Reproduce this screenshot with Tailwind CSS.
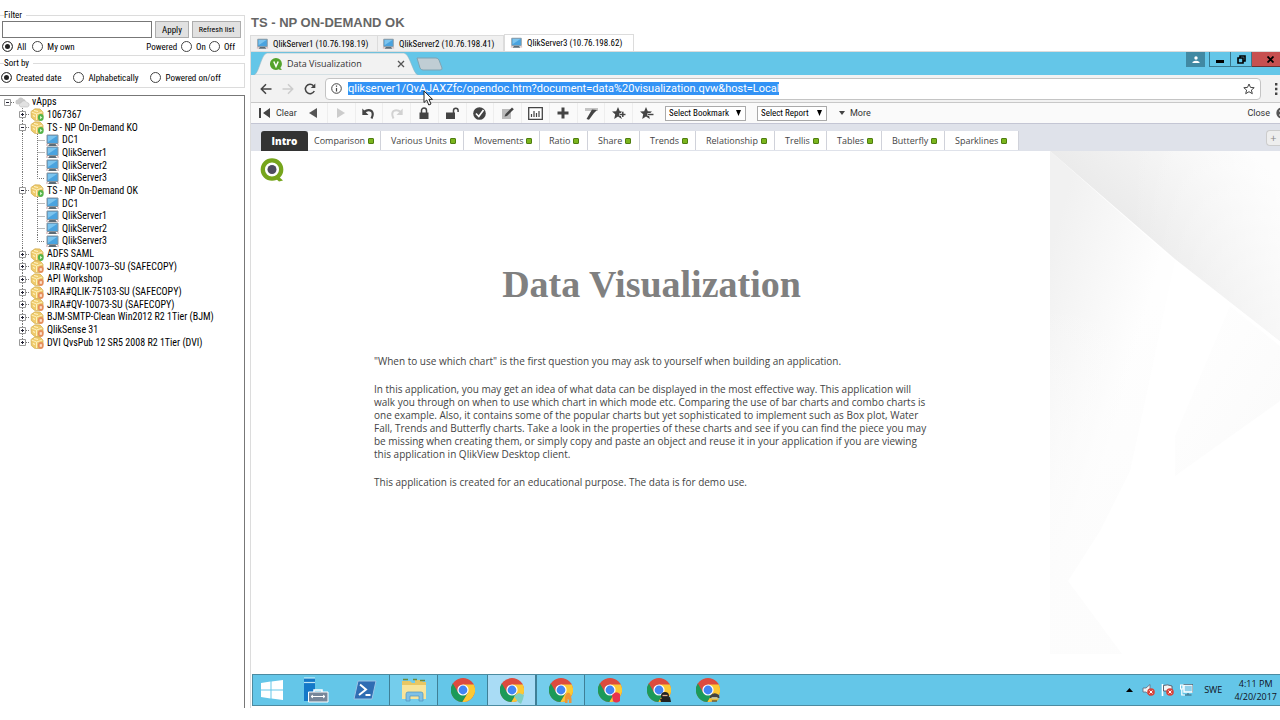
<!DOCTYPE html>
<html lang="en">
<head>
    <meta charset="UTF-8">
    <meta name="viewport" content="width=device-width, initial-scale=1.0">
    <title>TS - NP On-Demand OK</title>
    <script src="https://cdn.jsdelivr.net/npm/@tailwindcss/browser@4"></script>
</head>
<body class="bg-white text-black text-[9px] leading-[12px] font-['Roboto_Condensed','Roboto',sans-serif]">
    <!-- Icon sprite -->
    <svg class="hidden">
        <symbol id="t-line" viewBox="0 0 15 13"><path d="M7.5 0V13" stroke="#777" stroke-dasharray="1 1"/></symbol>
        <symbol id="t-tee" viewBox="0 0 15 13"><path d="M7.5 0V13M7.5 6.5H15" stroke="#777" stroke-dasharray="1 1" fill="none"/></symbol>
        <symbol id="t-end" viewBox="0 0 15 13"><path d="M7.5 0V6.5H15" stroke="#777" stroke-dasharray="1 1" fill="none"/></symbol>
        <symbol id="t-root" viewBox="0 0 15 13"><path d="M11 6.5H15" stroke="#777" stroke-dasharray="1 1"/><path d="M4.500 3.500h6v6h-6z" fill="#fff" stroke="#999"/><path d="M6 6.500h3" stroke="#223"/></symbol>
        <symbol id="t-minus" viewBox="0 0 15 13"><path d="M7.500 0V3M7.500 10V13M11 6.500H15" stroke="#777" stroke-dasharray="1 1"/><path d="M4.500 3.500h6v6h-6z" fill="#fff" stroke="#999"/><path d="M6 6.500h3" stroke="#223"/></symbol>
        <symbol id="t-plus" viewBox="0 0 15 13"><path d="M7.500 0V3M7.500 10V13M11 6.500H15" stroke="#777" stroke-dasharray="1 1"/><path d="M4.500 3.500h6v6h-6z" fill="#fff" stroke="#999"/><path d="M6 6.500h3M7.500 5v3" stroke="#223"/></symbol>
        <symbol id="t-plusend" viewBox="0 0 15 13"><path d="M7.500 0V3M11 6.500H15" stroke="#777" stroke-dasharray="1 1"/><path d="M4.500 3.500h6v6h-6z" fill="#fff" stroke="#999"/><path d="M6 6.500h3M7.500 5v3" stroke="#223"/></symbol>
        <symbol id="cloud" viewBox="0 0 15 13"><path d="M3 8.500a2.500 2.500 0 0 1 0-5 3 3 0 0 1 5.500-.5 2.500 2.500 0 0 1 2 2.500z" fill="#c9c9c9"/><path d="M6 11a2.300 2.300 0 0 1 .3-4.500 3 3 0 0 1 5.500 0A2.300 2.300 0 0 1 12.500 11z" fill="#e2e2e2" stroke="#bbb" stroke-width=".6"/></symbol>
        <symbol id="vapp-on" viewBox="0 0 15 13"><path d="M1 3.500 5 .8 10 1l3 3v5l-3.500 3.500-5-.2L1.300 9.500z" fill="#efcb6c" stroke="#cfa749" stroke-width=".7"/><path d="M1.500 4 6.500 6v6M6.500 6 12.500 4" fill="none" stroke="#fdf0bd"/><path d="M4 2.500 8 3.500M3 7.500l2 1" stroke="#fff3c4" stroke-width="1.200"/><ellipse cx="10.800" cy="9.500" rx="2.900" ry="3.400" fill="#55b34a"/><path d="M10 7.800v3.400l2.400-1.700z" fill="#d8f5cf"/></symbol>
        <symbol id="vapp-off" viewBox="0 0 15 13"><path d="M1 3.500 5 .8 10 1l3 3v5l-3.500 3.500-5-.2L1.300 9.500z" fill="#efcb6c" stroke="#cfa749" stroke-width=".7"/><path d="M1.500 4 6.500 6v6M6.500 6 12.500 4" fill="none" stroke="#fdf0bd"/><path d="M4 2.500 8 3.500M3 7.500l2 1" stroke="#fff3c4" stroke-width="1.200"/><ellipse cx="10.800" cy="9.500" rx="2.900" ry="3.400" fill="#e58f5c"/><path d="M9.700 8.200h2.200v2.600H9.700z" fill="#fbe3cf"/></symbol>
        <symbol id="pc" viewBox="0 0 15 13"><path d="M2 1h11v8.500H2z" fill="#4aa3df" stroke="#8a949c"/><path d="M3 2h9L3 8z" fill="#7cc4ee"/><path d="M4.500 10h6l1.500 2H3z" fill="#5d6b75"/><path d="M1 11h2M12 11h2" stroke="#c99"/></symbol>
        <symbol id="chrome" viewBox="0 0 24 24"><circle cx="12" cy="12" r="12" fill="#dd4b3e"/><path d="M12 6.500H22.700A12 12 0 0 1 11.200 24L16.760 14.750Z" fill="#fcc934"/><path d="M1.900 5.400 7.240 14.750 16.760 14.750 11.200 24A12 12 0 0 1 1.900 5.400Z" fill="#1b9a59"/><circle cx="12" cy="12" r="5.600" fill="#fff"/><circle cx="12" cy="12" r="4.400" fill="#4285f4"/></symbol>
    </svg>

    <div class="flex min-h-screen pb-3">
        <!-- Sidebar -->
        <aside class="flex flex-col w-[245px] shrink-0 pt-[9px]">
            <fieldset class="border border-[#dcdcdc] border-l-0">
                <legend class="ml-1 pr-1">Filter</legend>
                <div class="flex h-[17px] gap-[3px] pl-[2px] pr-[3px] items-stretch">
                    <input type="text" aria-label="Filter" class="w-[150px] border border-[#777] bg-white px-1">
                    <button class="w-[34px] border border-[#adadad] bg-[#e1e1e1]">Apply</button>
                    <button class="flex-1 border border-[#adadad] bg-[#e1e1e1] text-[8px]">Refresh list</button>
                </div>
                <div class="flex h-[17px] items-center pl-[2px] pr-[9px]">
                    <label class="flex items-center gap-1"><input type="radio" name="owner" checked class="appearance-none size-[11px] rounded-full border border-[#444] checked:bg-[#222] checked:shadow-[inset_0_0_0_2px_#fff]">All</label>
                    <label class="flex items-center gap-1 ml-[6px]"><input type="radio" name="owner" class="appearance-none size-[11px] rounded-full border border-[#444] checked:bg-[#222] checked:shadow-[inset_0_0_0_2px_#fff]">My own</label>
                    <span class="ml-auto">Powered</span>
                    <label class="flex items-center gap-1 ml-1"><input type="radio" name="power" class="appearance-none size-[11px] rounded-full border border-[#444] checked:bg-[#222] checked:shadow-[inset_0_0_0_2px_#fff]">On</label>
                    <label class="flex items-center gap-1 ml-[3px]"><input type="radio" name="power" class="appearance-none size-[11px] rounded-full border border-[#444] checked:bg-[#222] checked:shadow-[inset_0_0_0_2px_#fff]">Off</label>
                </div>
            </fieldset>
            <fieldset class="mt-px border border-[#dcdcdc] border-l-0 pb-px">
                <legend class="ml-1 pr-1">Sort by</legend>
                <div class="flex h-[17px] items-center pl-px gap-3 whitespace-nowrap">
                    <label class="flex items-center gap-1"><input type="radio" name="sort" checked class="appearance-none size-[11px] rounded-full border border-[#444] checked:bg-[#222] checked:shadow-[inset_0_0_0_2px_#fff]">Created date</label>
                    <label class="flex items-center gap-1"><input type="radio" name="sort" class="appearance-none size-[11px] rounded-full border border-[#444] checked:bg-[#222] checked:shadow-[inset_0_0_0_2px_#fff]">Alphabetically</label>
                    <label class="flex items-center gap-1"><input type="radio" name="sort" class="appearance-none size-[11px] rounded-full border border-[#444] checked:bg-[#222] checked:shadow-[inset_0_0_0_2px_#fff]">Powered on/off</label>
                </div>
            </fieldset>
            <div class="mt-[7px] flex-1 border-t border-r border-[#777]">
                <ul id="tree" class="grid auto-rows-fr h-[253px] text-[10px]"></ul>
            </div>
        </aside>

        <!-- Console -->
        <main class="flex flex-col flex-1 min-w-0 ml-[5px] overflow-hidden">
            <h1 class="pt-3 pl-px h-[34px] text-[13px] leading-[22px] font-bold text-[#666] font-['Liberation_Sans',sans-serif]">TS - NP ON-DEMAND OK</h1>
            <div class="flex h-[17px] items-end whitespace-nowrap" role="tablist">
                <button role="tab" class="flex items-center gap-1 h-4 w-[128px] pl-[5px] bg-[#f0f0f0] border border-b-0 border-[#dcdcdc]"><svg class="w-[13px] h-3"><use href="#pc"/></svg>QlikServer1 (10.76.198.19)</button>
                <button role="tab" class="flex items-center gap-1 h-4 w-[126px] pl-[4px] bg-[#f0f0f0] border border-b-0 border-l-0 border-[#dcdcdc]"><svg class="w-[13px] h-3"><use href="#pc"/></svg>QlikServer2 (10.76.198.41)</button>
                <button role="tab" class="flex items-center gap-1 h-[17px] w-[130px] pl-[5px] bg-white border border-b-0 border-[#dcdcdc]"><svg class="w-[13px] h-3"><use href="#pc"/></svg>QlikServer3 (10.76.198.62)</button>
            </div>

            <div class="flex flex-col flex-1 border-t border-l border-[#dcdcdc] font-['Open_Sans',sans-serif]">
                <!-- Browser title bar -->
                <div class="flex h-[23px] bg-[#64c6e8] pl-[3px]">
                    <div class="relative w-[164px] h-[23px] flex items-center pl-[16px] text-[#333]">
                        <svg class="absolute inset-0" width="164" height="23" viewBox="0 0 164 23"><path d="M0 23C5 22 7 2 13 1H150C156 2 159 22 164 23Z" fill="#f2f2f2" stroke="#8fb5c4" stroke-width=".6"/></svg>
                        <svg class="relative size-3" viewBox="0 0 12 12"><path d="M6 0a6 6 0 1 1-.1 12A6 6 0 0 1 6 0Zm3 9 3 2.500-2 .5-3-2z" fill="#54a32c"/><path d="M3.800 3.500 6 8.500 8.200 3.500" fill="none" stroke="#fff" stroke-width="1.500"/></svg>
                        <span class="relative ml-[5px]">Data Visualization</span>
                        <button aria-label="Close tab" class="relative ml-auto mr-[13px]"><svg class="size-[8px]" viewBox="0 0 8 8"><path d="M1 1 7 7M7 1 1 7" stroke="#555" stroke-width="1.300"/></svg></button>
                    </div>
                    <button aria-label="New tab" class="self-center ml-[-2px]"><svg class="w-[27px] h-[14px]" viewBox="0 0 27 14"><path d="M1 1H20Q22 1 23 3L26 11Q26.500 13 24 13H7Q5 13 4 11Z" fill="#c0cdd4" stroke="#7fa3b3"/></svg></button>
                    <div class="ml-auto flex h-[15px]">
                        <button aria-label="Profile" class="flex justify-center items-center w-[19px] mr-1 bg-[#4189a3]"><svg class="size-[8px]" viewBox="0 0 8 8"><circle cx="4" cy="2" r="1.700" fill="#fff"/><path d="M.5 7V6Q4 3.500 7.500 6V7Z" fill="#fff"/></svg></button>
                        <button aria-label="Minimize" class="flex justify-center items-center w-[22px] border border-t-0 border-[#3a788e]"><svg class="w-2 h-[10px]" viewBox="0 0 8 10"><path d="M0 6H8V9H0Z"/></svg></button>
                        <button aria-label="Restore" class="flex justify-center items-center w-[21px] border border-t-0 border-l-0 border-[#3a788e]"><svg class="size-[9px]" viewBox="0 0 9 9"><path d="M3 2.500V1H8V6H6.500M1 3H6V8H1Z" fill="none" stroke="#000" stroke-width="1.600"/></svg></button>
                        <button aria-label="Close" class="flex justify-center items-center w-7 pl-[8px] bg-[#c75050] border-b border-[#6b3030]"><svg class="size-[7px]" viewBox="0 0 7 7"><path d="M.5.5 6.500 6.500M6.500.5.5 6.500" stroke="#000" stroke-width="1.800"/></svg></button>
                    </div>
                </div>

                <!-- Address bar -->
                <div class="flex items-center h-[28px] bg-[#f2f2f2] border-b border-[#c8c8c8]">
                    <button aria-label="Back" class="flex justify-center w-[22px] ml-1"><svg class="size-3" viewBox="0 0 12 12"><path d="M11.500 6H1.500M6 1.300 1.300 6 6 10.700" fill="none" stroke="#444" stroke-width="1.500"/></svg></button>
                    <button aria-label="Forward" class="flex justify-center w-[22px]"><svg class="size-3" viewBox="0 0 12 12"><path d="M.5 6H10.500M6 1.300 10.700 6 6 10.700" fill="none" stroke="#ccc" stroke-width="1.500"/></svg></button>
                    <button aria-label="Reload" class="flex justify-center w-[22px]"><svg class="size-3" viewBox="0 0 12 12"><path d="M10.300 8A4.700 4.700 0 1 1 9.500 2.700" fill="none" stroke="#444" stroke-width="1.500"/><path d="M11.300.5V5H6.800Z" fill="#444"/></svg></button>
                    <div class="flex flex-1 items-center h-[22px] ml-1 pl-[5px] pr-[5px] bg-white border border-[#c4c4c4] rounded-sm">
                        <svg class="size-[11px] mr-[6px]" viewBox="0 0 11 11"><circle cx="5.500" cy="5.500" r="4.800" fill="none" stroke="#444"/><path d="M5.500 5V8.500M5.500 2.500V3.800" stroke="#444" stroke-width="1.200"/></svg>
                        <input type="text" aria-label="Address" value="qlikserver1/QvAJAXZfc/opendoc.htm?document=data%20visualization.qvw&amp;host=Local" class="field-sizing-content h-[13px] leading-[13px] text-[11px] bg-[#3393f5] text-white font-['Roboto',sans-serif]">
                        <button aria-label="Bookmark this page" class="ml-auto"><svg class="size-3" viewBox="0 0 12 12"><path d="M6 1 7.500 4.400 11.200 4.700 8.400 7.100 9.300 10.700 6 8.700 2.700 10.700 3.600 7.100.8 4.700 4.500 4.400Z" fill="none" stroke="#444"/></svg></button>
                    </div>
                    <button aria-label="Menu" class="w-[19px] pl-[13px]"><svg class="w-1 h-3" viewBox="0 0 4 12"><path d="M1 0h2.400v2.400H1zM1 4.800h2.400v2.400H1zM1 9.600h2.400V12H1z" fill="#444"/></svg></button>
                </div>

                <!-- QlikView toolbar -->
                <div class="flex items-center h-[21px] bg-[#fafafa] border-b border-[#c4c6d4] text-[#333] font-['Roboto',sans-serif]">
                    <button class="flex items-center gap-[5px] w-[49px] pl-2"><svg class="w-3 h-[10px]" viewBox="0 0 12 10"><path d="M0 0H2V10H0ZM11 0V10L4 5Z" fill="#444"/></svg>Clear</button>
                    <div class="flex w-[360px] h-full divide-x divide-[#eee]">
                        <button aria-label="Back" class="flex flex-1 justify-center items-center"><svg class="size-3" viewBox="0 0 12 12"><path d="M10 1V11L2 6Z" fill="#555"/></svg></button>
                        <button aria-label="Forward" class="flex flex-1 justify-center items-center"><svg class="size-3" viewBox="0 0 12 12"><path d="M2 1V11L10 6Z" fill="#ccc"/></svg></button>
                        <button aria-label="Undo" class="flex flex-1 justify-center items-center"><svg class="size-[13px]" viewBox="0 0 13 13"><path d="M2 5Q6 2 9.500 4 12 6.500 9.500 11.500" fill="none" stroke="#444" stroke-width="2.200"/><path d="M.3 1.500V8H6.500Z" fill="#444"/></svg></button>
                        <button aria-label="Redo" class="flex flex-1 justify-center items-center"><svg class="size-[13px]" viewBox="0 0 13 13"><path d="M11 5Q7 2 3.500 4 1 6.500 3.500 11.500" fill="none" stroke="#d2d2d2" stroke-width="2"/><path d="M12.700 1.500V8H6.500Z" fill="#d2d2d2"/></svg></button>
                        <button aria-label="Lock" class="flex flex-1 justify-center items-center"><svg class="size-3" viewBox="0 0 12 12"><path d="M1.500 5.500H10.500V12H1.500Z" fill="#444"/><path d="M3.500 6V3.500a2.500 2.500 0 0 1 5 0V6" fill="none" stroke="#444" stroke-width="1.500"/></svg></button>
                        <button aria-label="Unlock" class="flex flex-1 justify-center items-center"><svg class="w-[13px] h-3" viewBox="0 0 13 12"><path d="M0 5.500H9V12H0Z" fill="#444"/><path d="M7.500 6V3.500a2.300 2.300 0 0 1 4.600 0V5" fill="none" stroke="#444" stroke-width="1.500"/></svg></button>
                        <button aria-label="Current selections" class="flex flex-1 justify-center items-center"><svg class="size-[13px]" viewBox="0 0 13 13"><circle cx="6.500" cy="6.500" r="6.300" fill="#444"/><path d="M3 6.500 5.800 9.500 10.500 3" fill="none" stroke="#fff" stroke-width="1.700"/></svg></button>
                        <button aria-label="Notes" class="flex flex-1 justify-center items-center"><svg class="size-[13px]" viewBox="0 0 13 13"><path d="M1 2H10V12H1Z" fill="#bbb"/><path d="M3.500 9.500 4.500 7 11 .5 12.800 2.200 6 9Z" fill="#444"/></svg></button>
                        <button aria-label="Chart" class="flex flex-1 justify-center items-center"><svg class="w-[15px] h-[13px]" viewBox="0 0 15 13"><path d="M.7.7H14.300V12.300H.7Z" fill="#fff" stroke="#444" stroke-width="1.300"/><path d="M3.500 10V7M6 10V4M8.500 10V6M11 10V4" stroke="#444" stroke-width="1.200"/></svg></button>
                        <button aria-label="Add" class="flex flex-1 justify-center items-center"><svg class="size-3" viewBox="0 0 12 12"><path d="M6 .5V11.500M.5 6H11.500" stroke="#444" stroke-width="3"/></svg></button>
                        <button aria-label="Wand" class="flex flex-1 justify-center items-center"><svg class="size-[13px]" viewBox="0 0 13 13"><path d="M0 1H13V4H0Z" fill="#c4c4c4"/><path d="M1.500 12 4 12.800 9 6 12 3 7 2.500Z" fill="#444"/></svg></button>
                        <button aria-label="Add bookmark" class="flex flex-1 justify-center items-center"><svg class="w-[14px] h-[13px]" viewBox="0 0 14 13"><path d="M6 0 7.800 4.200 12 4.500 8.800 7.300 9.800 12 6 9.500 2.200 12 3.200 7.300 0 4.500 4.200 4.200Z" fill="#444"/><path d="M7.500 7.500H14M10.800 4.500V10.500" stroke="#fff" stroke-width="3"/><path d="M8 7.500H13.500M10.800 5V10" stroke="#444" stroke-width="1.500"/></svg></button>
                        <button aria-label="Remove bookmark" class="flex flex-1 justify-center items-center"><svg class="w-[14px] h-[13px]" viewBox="0 0 14 13"><path d="M6 0 7.800 4.200 12 4.500 8.800 7.300 9.800 12 6 9.500 2.200 12 3.200 7.300 0 4.500 4.200 4.200Z" fill="#444"/><path d="M7.500 7.500H14" stroke="#fff" stroke-width="3"/><path d="M8 7.500H13.500" stroke="#444" stroke-width="1.500"/></svg></button>
                    </div>
                    <label class="relative flex items-center ml-[5px]"><select aria-label="Select Bookmark" class="appearance-none w-[81px] h-[15px] pl-[3px] bg-white border border-[#aaa] text-black font-['Roboto_Condensed','Roboto',sans-serif]"><option>Select Bookmark</option></select><svg class="absolute right-[5px] w-[5px] h-[6px]" viewBox="0 0 5 6"><path d="M0 0H5L2.500 6Z"/></svg></label>
                    <label class="relative flex items-center ml-[11px]"><select aria-label="Select Report" class="appearance-none w-[70px] h-[15px] pl-[3px] bg-white border border-[#aaa] text-black font-['Roboto_Condensed','Roboto',sans-serif]"><option>Select Report</option></select><svg class="absolute right-[5px] w-[5px] h-[6px]" viewBox="0 0 5 6"><path d="M0 0H5L2.500 6Z"/></svg></label>
                    <button class="flex items-center gap-[5px] ml-3"><svg class="w-[6px] h-1" viewBox="0 0 6 4"><path d="M0 0H6L3 4Z" fill="#444"/></svg>More</button>
                    <button class="flex items-center gap-[6px] ml-auto -mr-2"><span>Close</span><svg class="size-3" viewBox="0 0 12 12"><circle cx="6" cy="6" r="5.700" fill="#555"/><path d="M3.500 3.500 8.500 8.500M8.500 3.500 3.500 8.500" stroke="#fff" stroke-width="1.500"/></svg></button>
                </div>

                <!-- Sheet tabs -->
                <div class="flex items-end h-[27px] pl-[10px] bg-[#dfe2ea] text-[#444]">
                    <button class="w-[47px] h-5 rounded-t-[3px] bg-[#333] text-white text-[10px] font-extrabold">Intro</button>
                    <div id="sheets" class="flex"></div>
                    <button aria-label="Add sheet" class="self-start ml-auto mt-[6px] w-[14px] h-4 rounded-l-sm bg-[#eee] border border-r-0 border-[#ccc] text-[#888] text-[11px]">+</button>
                </div>

                <!-- Sheet -->
                <div class="flex flex-1 bg-white">
                    <article class="w-[799px] pl-[123px] pr-[121px] pt-[7px] text-[10px] leading-[13px] text-[#444]">
                        <svg class="size-6 ml-[-114px]" viewBox="0 0 24 24"><path d="M17 17 23 22.500 19 23.500 14 19Z" fill="#76a51c"/><circle cx="12" cy="11.500" r="9.200" fill="#fff" stroke="#76a51c" stroke-width="4.300"/><circle cx="12" cy="11.500" r="4.500" fill="#4d4b5e"/></svg>
                        <h2 class="pt-[79px] pb-[48px] text-center text-[38px] leading-[46px] font-bold text-[#808080] font-['Liberation_Serif',serif]">Data Visualization</h2>
                        <p>"When to use which chart" is the first question you may ask to yourself when building an application.</p>
                        <p class="pt-[15px] whitespace-nowrap">In this application, you may get an idea of what data can be displayed in the most effective way. This application will<br>walk you through on when to use which chart in which mode etc. Comparing the use of bar charts and combo charts is<br>one example. Also, it contains some of the popular charts but yet sophisticated to implement such as Box plot, Water<br>Fall, Trends and Butterfly charts. Take a look in the properties of these charts and see if you can find the piece you may<br>be missing when creating them, or simply copy and paste an object and reuse it in your application if you are viewing<br>this application in QlikView Desktop client.</p>
                        <p class="pt-[15px]">This application is created for an educational purpose. The data is for demo use.</p>
                    </article>
                    <svg class="flex-1 h-[503px]" viewBox="0 0 230 503" preserveAspectRatio="none">
                        <defs>
                            <linearGradient id="beam" gradientUnits="userSpaceOnUse" x1="125" y1="108" x2="210" y2="10"><stop offset="0" stop-color="#ebebeb"/><stop offset="1" stop-color="#fbfbfb"/></linearGradient>
                            <linearGradient id="wash" x1="0" y1="0" x2="1" y2="0"><stop offset=".35" stop-color="#fff" stop-opacity="0"/><stop offset="1" stop-color="#fff" stop-opacity=".6"/></linearGradient>
                            <linearGradient id="side" gradientUnits="userSpaceOnUse" x1="0" y1="100" x2="105" y2="130"><stop offset="0" stop-color="#f1f1f1"/><stop offset="1" stop-color="#fefefe"/></linearGradient>
                            <linearGradient id="sink" gradientUnits="userSpaceOnUse" x1="0" y1="150" x2="0" y2="400"><stop offset="0" stop-color="#fcfcfc" stop-opacity="0"/><stop offset="1" stop-color="#fcfcfc" stop-opacity=".9"/></linearGradient>
                            <linearGradient id="fade" x1="0" y1="0" x2="1" y2="1"><stop offset="0" stop-color="#fff"/><stop offset="1" stop-color="#fafafa"/></linearGradient>
                        </defs>
                        <path d="M0 0V503H72L18 430 50 380 80 320 125 110Z" fill="url(#side)"/>
                        <path d="M0 150V503H72L18 430 50 380 80 320 117 150Z" fill="url(#sink)"/>
                        <path d="M0 0H230V190L125 108Z" fill="url(#beam)"/>
                        <path d="M0 0H230V190L125 108Z" fill="url(#wash)"/>
                        <path d="M180 155 230 195V250L125 325V285Z" fill="url(#fade)"/>
                    </svg>
                </div>

                <!-- Taskbar -->
                <div class="flex h-8 ml-px bg-[#64c6e8] border border-r-0 border-[#4c8ba1] text-[#112]">
                    <button aria-label="Start" class="flex justify-center items-center w-[38px]"><svg class="w-[22px] h-5" viewBox="0 0 22 20"><path d="M0 3 9.500 1.600V9.500H0ZM10.500 1.500 22 0V9.500H10.500ZM0 10.500H9.500V18.400L0 17ZM10.500 10.500H22V20L10.500 18.500Z" fill="#fff"/></svg></button>
                    <button aria-label="Server Manager" class="flex justify-center items-center w-[49px]"><svg class="w-[26px] h-[26px]" viewBox="0 0 26 26"><path d="M1 1H12V24H1Z" fill="#1478c8"/><path d="M1 5.500H12" stroke="#bfe4f5" stroke-width="1.200"/><path d="M1 1H12" stroke="#dff"/><path d="M11 15V13H19V15" fill="none" stroke="#fff" stroke-width="1.500"/><path d="M5.500 15H25V25H5.500Z" fill="#76879a" stroke="#fff"/><path d="M8 19.500H22M10 18 8 19.500 10 21M20 18 22 19.500 20 21" fill="none" stroke="#fff"/></svg></button>
                    <button aria-label="PowerShell" class="flex justify-center items-center w-[49px]"><svg class="w-6 h-5" viewBox="0 0 24 20"><path d="M5 1H23L19 19H1Z" fill="#2f6db3" stroke="#9cc4e6"/><path d="M7 4.500 13 9.500 6 15M12.500 15H17.500" fill="none" stroke="#fff" stroke-width="2"/></svg></button>
                    <button aria-label="File Explorer" class="flex justify-center items-center w-[49px] border-x border-[#3f7f96] bg-[#74cdec]"><svg class="w-[26px] h-6" viewBox="0 0 26 24"><path d="M1 3H9L11 5H14V2H20L22 4H25V21H1Z" fill="#e8c763"/><path d="M1 7H25V21H1Z" fill="#f8e49a"/><path d="M2 1.500H7M12 1.500H16M19 2.500H24" stroke="#6a8a3c" stroke-width="1.500"/><path d="M5 23V16Q5 14 7 14H20Q22 14 22 16V23H18V18H9V23Z" fill="#7fc1e6" stroke="#4d93bd" stroke-width=".7"/></svg></button>
                    <button aria-label="Chrome" class="flex justify-center items-center w-[49px]"><svg class="size-6"><use href="#chrome"/></svg></button>
                    <button aria-label="Chrome, profile 1" class="flex justify-center items-center w-[49px] border-x border-[#3f7f96] bg-[#a9dcf5]"><svg class="size-6 overflow-visible" viewBox="0 0 24 24"><use href="#chrome" width="24" height="24"/><path d="M14 18 19 15 24 17 23 21 21 26 18 24Z" fill="#7fcfc0"/></svg></button>
                    <button aria-label="Chrome, profile 2" class="flex justify-center items-center w-[49px] border-x border-[#3f7f96] bg-[#74cdec]"><svg class="size-6 overflow-visible" viewBox="0 0 24 24"><use href="#chrome" width="24" height="24"/><path d="M16 25Q15 16 19 14.500 23 15 22.500 25H20V21H18.500V25Z" fill="#f09437"/></svg></button>
                    <button aria-label="Chrome, profile 3" class="flex justify-center items-center w-[49px]"><svg class="size-6 overflow-visible" viewBox="0 0 24 24"><use href="#chrome" width="24" height="24"/><path d="M14 17Q18 12 22 16V23Q18 26 15 23Z" fill="#e8324f"/></svg></button>
                    <button aria-label="Chrome, profile 4" class="flex justify-center items-center w-[49px]"><svg class="size-6 overflow-visible" viewBox="0 0 24 24"><use href="#chrome" width="24" height="24"/><circle cx="18" cy="18" r="4" fill="#222"/><path d="M13 21 23 19 24 24H14Z" fill="#222"/><path d="M15.500 17.500H20.500" stroke="#e0b090" stroke-width="1.300"/></svg></button>
                    <button aria-label="Chrome, profile 5" class="flex justify-center items-center w-[49px]"><svg class="size-6 overflow-visible" viewBox="0 0 24 24"><use href="#chrome" width="24" height="24"/><circle cx="18.500" cy="19.500" r="4.300" fill="#e5b93c"/><path d="M14 18Q18 13 23 17L23.500 20H14Z" fill="#444"/><path d="M15.500 20H21.500" stroke="#c9c9a0" stroke-width="1.800"/><path d="M16 23H21" stroke="#333"/></svg></button>
                    <div class="flex items-center ml-auto pr-[3px]">
                        <svg class="w-[7px] h-1" viewBox="0 0 7 4"><path d="M3.500 0 7 4H0Z"/></svg>
                        <svg class="w-[13px] h-3 ml-[9px]" viewBox="0 0 13 12"><path d="M1 4H4L8 .5V11.500L4 8H1Z" fill="#f4f4f4" stroke="#667" stroke-width=".8"/><circle cx="9" cy="8" r="3.800" fill="#d9433a"/><path d="M7.500 6.500 10.500 9.500M10.500 6.500 7.500 9.500" stroke="#fff"/></svg>
                        <svg class="w-[13px] h-3 ml-[6px]" viewBox="0 0 13 12"><path d="M1.500 0V12" stroke="#fff" stroke-width="1.600"/><path d="M2.500 1.500Q6 0 11 2V7H2.500Z" fill="#f4f4f4" stroke="#445" stroke-width=".8"/><circle cx="9" cy="8" r="3.800" fill="#d9433a"/><path d="M7.500 6.500 10.500 9.500M10.500 6.500 7.500 9.500" stroke="#fff"/></svg>
                        <svg class="w-[13px] h-3 ml-[6px]" viewBox="0 0 13 12"><path d="M4 1H12.500V8H4Z" fill="#8fd0ea" stroke="#fff" stroke-width="1.400"/><path d="M3.200.3H13V8.700M8 9V10.500M5 11H11.500" fill="none" stroke="#345" stroke-width=".8"/><path d="M.5 1H3V5H.5ZM1.800 5V11H5" fill="none" stroke="#fff" stroke-width="1.200"/></svg>
                        <span class="ml-[11px]">SWE</span>
                        <div class="ml-3 text-center leading-[13px]">4:11 PM<br>4/20/2017</div>
                    </div>
                </div>
                <div class="h-[2px] bg-white"></div>
            </div>
        </main>
    </div>

    <!-- Mouse pointer -->
    <svg class="absolute left-[423px] top-[90px] w-[11px] h-4" viewBox="0 0 11 16"><path d="M1 1V12.500L3.700 10 5.800 15 8 14 5.900 9.300H9.500Z" fill="#fff" stroke="#222"/></svg>

    <script>
        // [guide cells, icon, label]
        const rows = [
            [['root'], 'cloud', 'vApps'],
            [['', 'plus'], 'vapp-on', '1067367'],
            [['', 'minus'], 'vapp-on', 'TS - NP On-Demand KO'],
            [['', 'line', 'tee'], 'pc', 'DC1'],
            [['', 'line', 'tee'], 'pc', 'QlikServer1'],
            [['', 'line', 'tee'], 'pc', 'QlikServer2'],
            [['', 'line', 'end'], 'pc', 'QlikServer3'],
            [['', 'minus'], 'vapp-on', 'TS - NP On-Demand OK'],
            [['', 'line', 'tee'], 'pc', 'DC1'],
            [['', 'line', 'tee'], 'pc', 'QlikServer1'],
            [['', 'line', 'tee'], 'pc', 'QlikServer2'],
            [['', 'line', 'end'], 'pc', 'QlikServer3'],
            [['', 'plus'], 'vapp-on', 'ADFS SAML'],
            [['', 'plus'], 'vapp-off', 'JIRA#QV-10073--SU (SAFECOPY)'],
            [['', 'plus'], 'vapp-off', 'API Workshop'],
            [['', 'plus'], 'vapp-off', 'JIRA#QLIK-75103-SU (SAFECOPY)'],
            [['', 'plus'], 'vapp-off', 'JIRA#QV-10073-SU (SAFECOPY)'],
            [['', 'plus'], 'vapp-off', 'BJM-SMTP-Clean Win2012 R2 1Tier (BJM)'],
            [['', 'plus'], 'vapp-off', 'QlikSense 31'],
            [['', 'plusend'], 'vapp-off', 'DVI QvsPub 12 SR5 2008 R2 1Tier (DVI)']
        ];
        document.getElementById('tree').innerHTML = rows.map(([cells, icon, label]) => `
            <li class="flex items-center">
                ${cells.map(c => `<svg class="w-[15px] h-[13px]">${c ? `<use href="#t-${c}"/>` : ''}</svg>`).join('')}
                <svg class="w-[15px] h-[13px]"><use href="#${icon}"/></svg>
                <span class="ml-[2px] whitespace-nowrap">${label}</span>
            </li>`).join('');

        const sheets = [
            ['Comparison', 'w-[73px] pl-[6px]'],
            ['Various Units', 'w-[83px] pl-[10px]'],
            ['Movements', 'w-[76px] pl-[10px]'],
            ['Ratio', 'w-[48px] pl-[9px]'],
            ['Share', 'w-[52px] pl-[10px]'],
            ['Trends', 'w-[56px] pl-[10px]'],
            ['Relationship', 'w-[79px] pl-[10px]'],
            ['Trellis', 'w-[52px] pl-[10px]'],
            ['Tables', 'w-[55px] pl-[10px]'],
            ['Butterfly', 'w-[63px] pl-[10px]'],
            ['Sparklines', 'w-[74px] pl-[10px]']
        ];
        document.getElementById('sheets').innerHTML = sheets.map(([name, size]) => `
            <button class="flex items-center gap-[3px] h-[19px] mb-px bg-white border-r border-[#d0d2da] whitespace-nowrap ${size}">
                ${name}<span class="size-[6px] rounded-[1px] bg-[#7ab51d] border border-[#4f7d10]"></span>
            </button>`).join('');
    </script>
</body>
</html>
